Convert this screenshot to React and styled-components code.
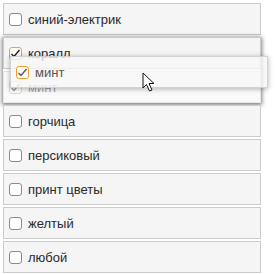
import React from "react";
import styled, { createGlobalStyle } from "styled-components";

const GlobalStyle = createGlobalStyle`
  body {
    margin: 0;
    background: #fff;
    font-family: "Liberation Sans", Arial, sans-serif;
  }
`;

const List = styled.div`
  position: relative;
  width: 258px;
  padding: 3px;
`;

const Row = styled.div`
  display: flex;
  align-items: center;
  gap: 6px;
  height: 30px;
  padding: 0 5px;
  border: 1px solid #cbcbcb;
  background: #f5f5f5;
  color: #2a2a2a;
  font-size: 13px;
  margin-bottom: ${({ $flush }) => ($flush ? "0" : "2px")};
  opacity: ${({ $faded }) => ($faded ? 0.45 : 1)};
`;

const Group = styled.div`
  display: flex;
  flex-direction: column;
  gap: 2px;
  margin-bottom: 2px;
  box-shadow: 0 1px 4px 1px rgba(0, 0, 0, 0.5);
`;

const Box = styled.span`
  display: flex;
  align-items: center;
  justify-content: center;
  width: 11px;
  height: 11px;
  border: 1px solid ${({ $checked }) => ($checked ? "#f0a02c" : "#8a8a8a")};
  border-radius: 3px;
  background: #fff;
  flex-shrink: 0;
`;

const Ghost = styled(Row)`
  position: absolute;
  left: 10px;
  top: 56px;
  width: 246px;
  margin: 0;
  background: rgba(247, 247, 247, 0.78);
  border-color: rgba(200, 200, 200, 0.8);
  box-shadow: 0 1px 5px rgba(0, 0, 0, 0.3);
  color: #555;
`;

const Cursor = styled.svg`
  position: absolute;
  left: 142px;
  top: 72px;
`;

const Check = ({ color = "#222" }) => (
  <svg width="11" height="11" viewBox="0 0 11 11">
    <polyline
      points="1.5,6 4,8.5 9.5,2"
      fill="none"
      stroke={color}
      strokeWidth="1.4"
    />
  </svg>
);

const Item = ({ label, checked, faded, flush }) => (
  <Row $faded={faded} $flush={flush}>
    <Box $checked={checked}>{checked && <Check />}</Box>
    {label}
  </Row>
);

const items = ["горчица", "персиковый", "принт цветы", "желтый", "любой"];

export default function App() {
  return (
    <>
      <GlobalStyle />
      <List>
        <Item label="синий-электрик" />
        <Group>
          <Item label="коралл" checked flush />
          <Item label="минт" checked faded flush />
        </Group>
        {items.map((label) => (
          <Item key={label} label={label} />
        ))}
        <Ghost>
          <Box $checked>
            <Check color="#555" />
          </Box>
          минт
        </Ghost>
        <Cursor width="14" height="21" viewBox="0 0 14 21">
          <path
            d="M1 1 L1 16 L4.5 12.5 L7.5 19 L10 18 L7 11.5 L12 11.5 Z"
            fill="#fff"
            stroke="#111"
            strokeWidth="1"
            strokeLinejoin="round"
          />
        </Cursor>
      </List>
    </>
  );
}
